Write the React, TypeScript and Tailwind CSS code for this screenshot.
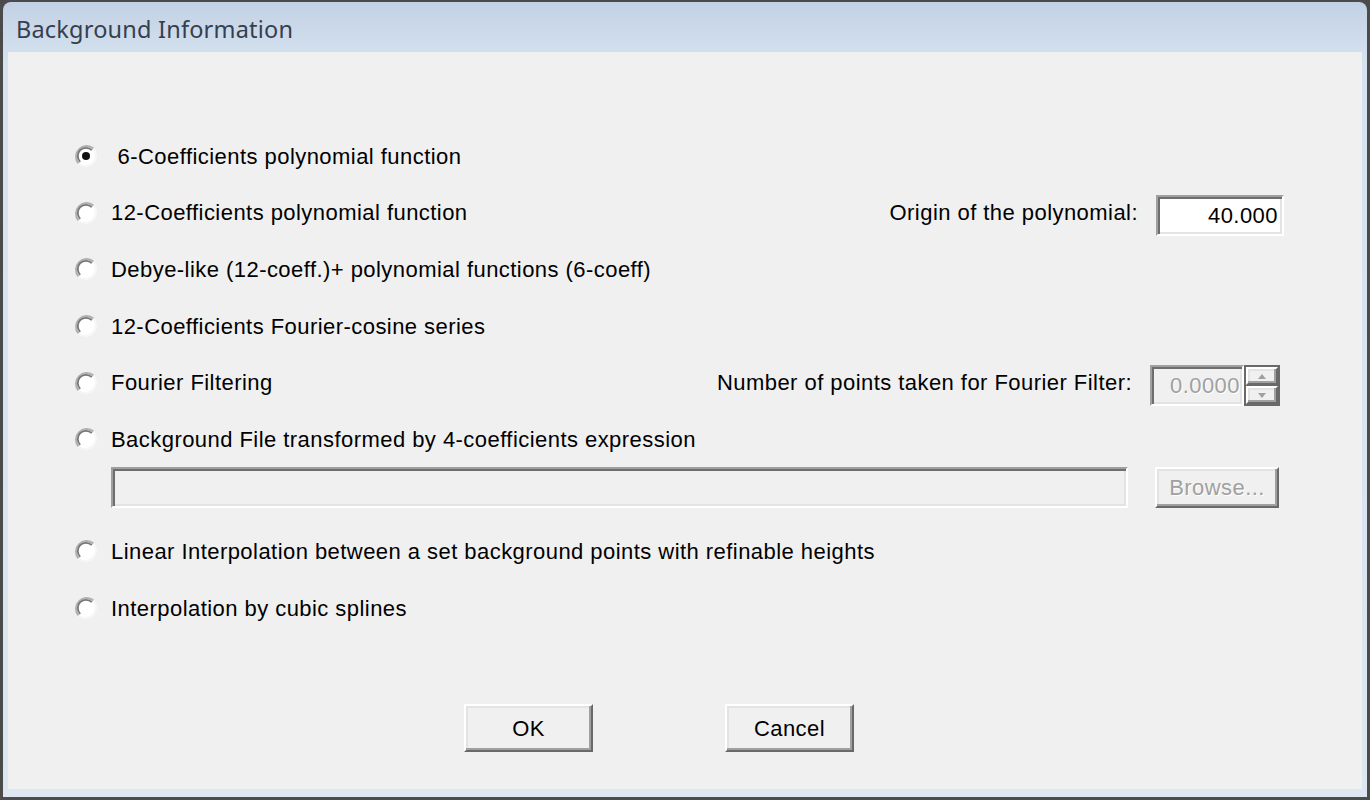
import React from "react";

const FONT = { fontFamily: '"Liberation Sans", Arial, sans-serif' };

const Radio = ({ checked }: { checked?: boolean }) => (
    <svg width="24" height="24" viewBox="0 0 24 24" className="shrink-0">
        <circle cx="12" cy="12" r="10.5" fill="#ffffff" />
        <path d="M4.6 19.4 A10.5 10.5 0 0 1 19.4 4.6" fill="none" stroke="#b0b0b0" strokeWidth="2.2" />
        <path d="M6.2 17.8 A8.2 8.2 0 0 1 17.8 6.2" fill="none" stroke="#777777" strokeWidth="1.8" />
        <path d="M19.4 4.6 A10.5 10.5 0 0 1 4.6 19.4" fill="none" stroke="#f7f7f7" strokeWidth="2" />
        {checked && <circle cx="12" cy="12" r="4" fill="#111111" />}
    </svg>
);

const sunken =
    "border-2 border-t-[#a0a0a0] border-l-[#a0a0a0] border-b-white border-r-white shadow-[inset_2px_2px_0_#6e6e6e,inset_-2px_-2px_0_#e3e3e3]";
const raised =
    "border-2 border-t-white border-l-white border-b-[#696969] border-r-[#696969] shadow-[inset_-2px_-2px_0_#a0a0a0,inset_2px_2px_0_#e3e3e3] bg-[#f0f0f0]";

const TEXT = "text-[22px] tracking-[0.45px]";

type OptionRowProps = {
    label: string,
    checked?: boolean,
    children?: React.ReactNode,
}

const OptionRow = ({ label, checked, children }: OptionRowProps) => (
    <div className="h-[56.6px] flex items-center">
        <div className="w-[37px] flex items-center"><Radio checked={checked} /></div>
        <span className={`whitespace-pre ${TEXT} text-black`}>{label}</span>
        <div className="flex-1"></div>
        {children}
    </div>
);

const Arrow = ({ up }: { up?: boolean }) => (
    <svg width="8" height="5" viewBox="0 0 8 5">
        <polygon points={up ? "4,0 8,5 0,5" : "0,0 8,0 4,5"} fill="#a0a0a0" />
    </svg>
);

export default function App() {
    return (
        <div className="w-[1370px] h-[800px] bg-[#4b4b4b] pt-[2px] px-[3px] pb-[3px] flex" style={FONT}>
            <div className="flex-1 flex flex-col rounded-t-[8px] bg-[linear-gradient(to_bottom,#c2d1e5,#d6e2ef_60px,#dde6f1)] px-[5px] pb-[8px]">
                <div className="h-[50px] flex items-center pl-[8px] pt-[6px]">
                    <span className="text-[23.5px] text-[#34404f] tracking-[0.2px]" style={{ fontFamily: '"Noto Sans", "Open Sans", sans-serif' }}>
                        Background Information
                    </span>
                </div>
                <div className="flex-1 bg-[#f0f0f0] flex flex-col pt-[76px] pl-[66px] pr-[78px]">
                    <OptionRow label=" 6-Coefficients polynomial function" checked />
                    <OptionRow label="12-Coefficients polynomial function">
                        <span className={`${TEXT} mr-[18px]`}>Origin of the polynomial:</span>
                        <div className={`${sunken} w-[128px] h-[41px] mt-[6px] bg-white flex items-center justify-end pr-[4px] ${TEXT}`}>
                            40.000
                        </div>
                    </OptionRow>
                    <OptionRow label="Debye-like (12-coeff.)+ polynomial functions (6-coeff)" />
                    <OptionRow label="12-Coefficients Fourier-cosine series" />
                    <OptionRow label="Fourier Filtering">
                        <span className={`${TEXT} mr-[18px]`}>Number of points taken for Fourier Filter:</span>
                        <div className="flex mt-[6px] mr-[4px]">
                            <div className={`${sunken} w-[94px] h-[41px] flex items-center justify-end pr-[2px] ${TEXT} text-[#a0a0a0] [text-shadow:1px_1px_0_#ffffff]`}>
                                0.0000
                            </div>
                            <div className="w-[36px] h-[41px] bg-[#696969] p-[2px] flex flex-col gap-[1px]">
                                <div className={`${raised} flex-1 flex items-center justify-center`}><Arrow up /></div>
                                <div className={`${raised} flex-1 flex items-center justify-center`}><Arrow /></div>
                            </div>
                        </div>
                    </OptionRow>
                    <OptionRow label="Background File transformed by 4-coefficients expression" />
                    <div className="h-[56.6px] flex items-start pl-[37px] pr-[5px] gap-[27px] -mt-[1px]">
                        <div className={`${sunken} flex-1 h-[41px] bg-[#f0f0f0]`}></div>
                        <div className={`${raised} w-[124px] h-[41px] flex items-center justify-center ${TEXT} text-[#a0a0a0] [text-shadow:1px_1px_0_#ffffff]`}>
                            Browse...
                        </div>
                    </div>
                    <OptionRow label="Linear Interpolation between a set background points with refinable heights" />
                    <OptionRow label="Interpolation by cubic splines" />
                    <div className="flex mt-[68px] pl-[390px] gap-[132px]">
                        <button className={`${raised} w-[129px] h-[48px] ${TEXT} text-black`}>OK</button>
                        <button className={`${raised} w-[129px] h-[48px] ${TEXT} text-black`}>Cancel</button>
                    </div>
                </div>
            </div>
        </div>
    );
}
